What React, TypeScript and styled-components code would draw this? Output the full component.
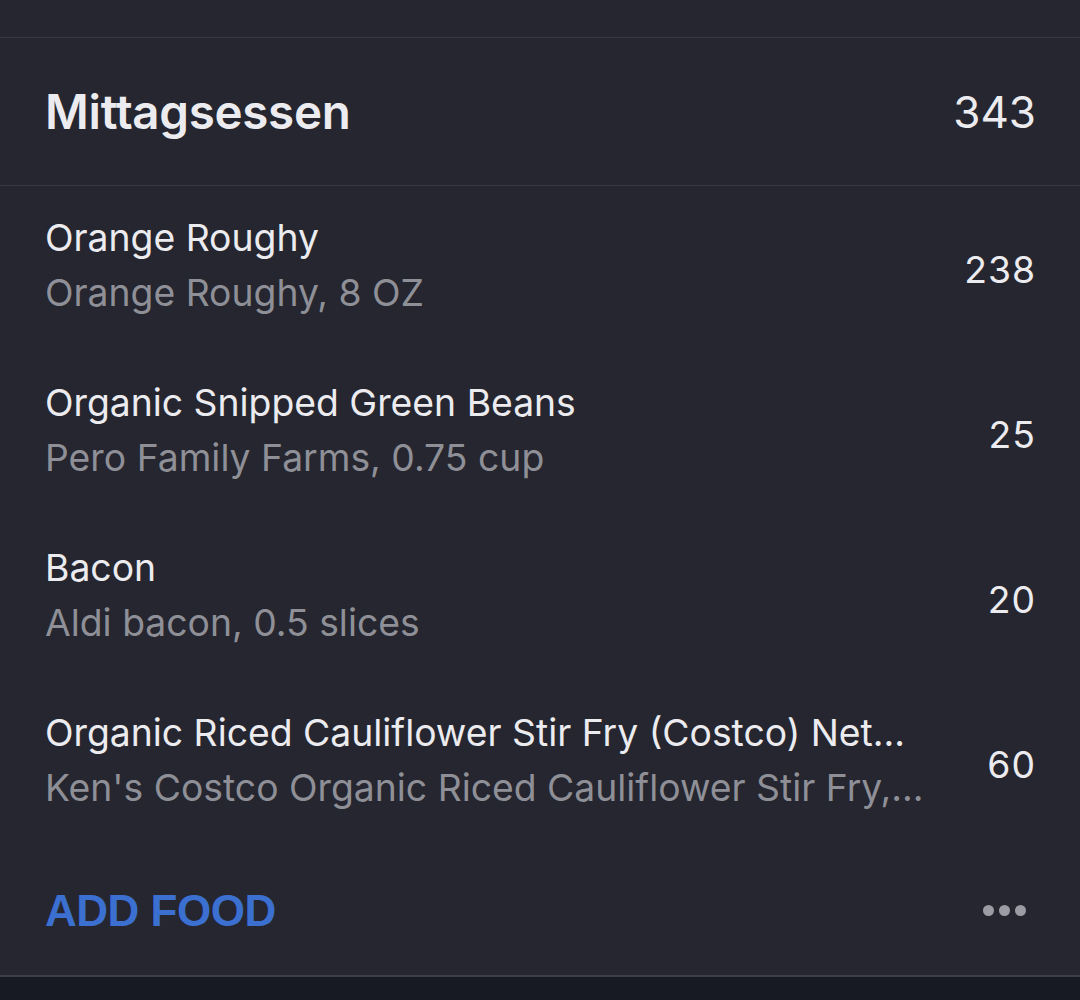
import React from 'react';
import styled, { createGlobalStyle } from 'styled-components';

const GlobalStyle = createGlobalStyle`
  html, body {
    margin: 0;
    padding: 0;
    background: #25262f;
  }
  body {
    font-family: Inter, "Noto Sans", "Liberation Sans", sans-serif;
    -webkit-font-smoothing: antialiased;
  }
`;

type FoodItem = {
  name: string,
  detail: string,
  calories: number,
}

// names as the list shows them, already shortened to fit the row
const items: FoodItem[] = [
  { name: 'Orange Roughy', detail: 'Orange Roughy, 8 OZ', calories: 238 },
  { name: 'Organic Snipped Green Beans', detail: 'Pero Family Farms, 0.75 cup', calories: 25 },
  { name: 'Bacon', detail: 'Aldi bacon, 0.5 slices', calories: 20 },
  {
    name: 'Organic Riced Cauliflower Stir Fry (Costco) Net…',
    detail: "Ken's Costco Organic Riced Cauliflower Stir Fry,…",
    calories: 60
  }
];

const Page = styled.div`
  width: 1080px;
  height: 1000px;
  display: flex;
  flex-direction: column;
  background: #25262f;
  color: #ececf0;
  overflow: hidden;
`;

const TopStrip = styled.div`
  height: 37px;
  flex-shrink: 0;
`;

const Divider = styled.div<{ $tone?: 'light' }>`
  height: ${({ $tone }) => ($tone === 'light' ? 2 : 1)}px;
  flex-shrink: 0;
  background: ${({ $tone }) => ($tone === 'light' ? '#3c3e4a' : '#363843')};
`;

const Header = styled.div`
  height: 147px;
  flex-shrink: 0;
  display: flex;
  align-items: center;
  justify-content: space-between;
  padding: 0 44px 0 45px;
`;

const MealTitle = styled.h1`
  margin: 0;
  font-size: 47.5px;
  font-weight: 600;
  letter-spacing: -0.3px;
  color: #ececf0;
`;

const MealTotal = styled.span`
  font-size: 44px;
  font-weight: 400;
  color: #ececf0;
`;

const List = styled.div`
  display: flex;
  flex-direction: column;
`;

const Row = styled.div`
  height: 165px;
  box-sizing: border-box;
  padding: 24px 44px 31px 45px;
  display: flex;
  align-items: center;
`;

const TextBlock = styled.div`
  flex: 1;
  min-width: 0;
  display: flex;
  flex-direction: column;
`;

const Line = styled.div<{ $muted?: boolean }>`
  height: 55px;
  line-height: 55px;
  font-size: 37.3px;
  font-weight: 400;
  white-space: nowrap;
  overflow: hidden;
  text-overflow: ellipsis;
  color: ${({ $muted }) => ($muted ? '#8f9097' : '#ececf0')};
`;

const Calories = styled.span`
  width: 100px;
  flex-shrink: 0;
  text-align: right;
  padding-top: 8px;
  font-size: 37.3px;
  letter-spacing: 1px;
  color: #ececf0;
`;

const Footer = styled.div`
  height: 129px;
  flex-shrink: 0;
  display: flex;
  align-items: center;
  justify-content: space-between;
  padding: 0 54px 0 45px;
`;

const AddButton = styled.button`
  background: none;
  border: none;
  padding: 0;
  font-family: "Liberation Sans", Arial, sans-serif;
  font-size: 44px;
  font-weight: 700;
  letter-spacing: -0.5px;
  color: #3b6fd0;
  cursor: pointer;
`;

const MoreButton = styled.button`
  background: none;
  border: none;
  padding: 0;
  display: flex;
  gap: 5px;
  cursor: pointer;
`;

const Dot = styled.span`
  width: 11px;
  height: 11px;
  border-radius: 50%;
  background: #9c9da4;
`;

const BottomBand = styled.div`
  flex: 1;
  background: #171923;
`;

export default function App() {
  return (
    <>
      <GlobalStyle />
      <Page>
        <TopStrip />
        <Divider />
        <Header>
          <MealTitle>Mittagsessen</MealTitle>
          <MealTotal>343</MealTotal>
        </Header>
        <Divider />
        <List>
          {items.map((item) => (
            <Row key={item.name}>
              <TextBlock>
                <Line>{item.name}</Line>
                <Line $muted>{item.detail}</Line>
              </TextBlock>
              <Calories>{item.calories}</Calories>
            </Row>
          ))}
        </List>
        <Footer>
          <AddButton>ADD FOOD</AddButton>
          <MoreButton aria-label='More'>
            <Dot />
            <Dot />
            <Dot />
          </MoreButton>
        </Footer>
        <Divider $tone='light' />
        <BottomBand />
      </Page>
    </>
  );
}
